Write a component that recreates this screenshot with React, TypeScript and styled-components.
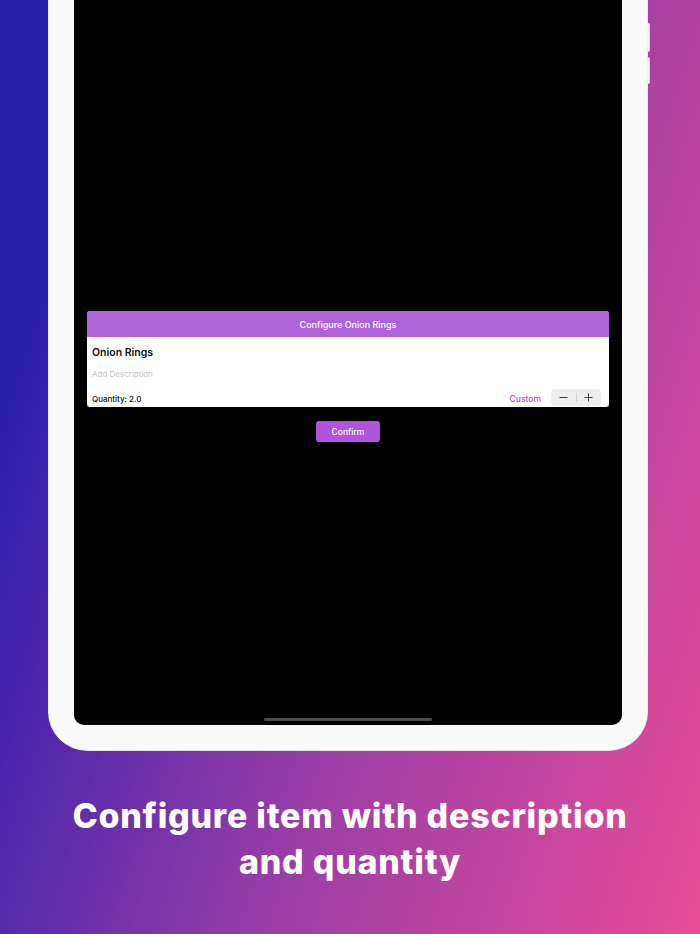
import React from "react";
import styled, { createGlobalStyle } from "styled-components";

const GlobalStyle = createGlobalStyle`
  html, body {
    margin: 0;
    padding: 0;
  }
  body {
    font-family: Inter, "Liberation Sans", sans-serif;
  }
`;

const Page = styled.div`
  width: 700px;
  height: 934px;
  overflow: hidden;
  display: flex;
  flex-direction: column;
  background: linear-gradient(108deg, #2c1ead 14%, #9b3ea6 57%, #e84c98 100%);
`;

const DeviceFrame = styled.div`
  position: relative;
  box-sizing: border-box;
  margin-left: 49px;
  width: 598px;
  height: 750px;
  padding: 0 25px 25px;
  display: flex;
  background: #fafafa;
  border-radius: 0 0 38px 38px;
  box-shadow: 0 1px 0 #e2e2e2, 1px 0 0 #ececec, -1px 0 0 #ececec;
`;

const SideButton = styled.div<{ $top: number; $height: number }>`
  position: absolute;
  right: -3px;
  top: ${(p) => p.$top}px;
  width: 3px;
  height: ${(p) => p.$height}px;
  background: #f4f4f4;
  border: 1px solid #dcdcdc;
  border-left: none;
  border-radius: 0 2px 2px 0;
  box-sizing: border-box;
`;

const Screen = styled.div`
  flex: 1;
  display: flex;
  flex-direction: column;
  align-items: center;
  background: #000;
  border-radius: 0 0 10px 10px;
  padding-top: 311px;
`;

const Dialog = styled.div`
  align-self: stretch;
  margin: 0 13px;
  background: #fff;
  border-radius: 3px;
  overflow: hidden;
`;

const DialogHeader = styled.div`
  height: 26px;
  display: flex;
  align-items: center;
  justify-content: center;
  background: #ae62d9;
  color: #fff;
  font-size: 9px;
  font-weight: 500;
`;

const DialogBody = styled.div`
  display: flex;
  flex-direction: column;
  padding: 8px 8px 0 5px;
  height: 70px;
  box-sizing: border-box;
`;

const ItemName = styled.div`
  font-size: 10.5px;
  font-weight: 600;
  color: #111;
  line-height: 15px;
`;

const Placeholder = styled.div`
  margin-top: 8px;
  font-size: 8px;
  color: #c4c4c4;
  line-height: 12px;
`;

const QuantityRow = styled.div`
  margin-top: auto;
  height: 17px;
  display: flex;
  align-items: center;
  margin-bottom: 1px;
`;

const QuantityLabel = styled.span`
  font-size: 8px;
  font-weight: 500;
  color: #111;
  margin-top: 2px;
`;

const CustomLink = styled.span`
  margin-left: auto;
  margin-right: 10px;
  margin-top: 2px;
  font-size: 8.5px;
  font-weight: 500;
  color: #b24fdf;
`;

const Stepper = styled.div`
  width: 50px;
  height: 17px;
  display: flex;
  align-items: center;
  background: #eeeeee;
  border-radius: 4px;
`;

const StepButton = styled.div`
  flex: 1;
  display: flex;
  align-items: center;
  justify-content: center;
`;

const StepDivider = styled.div`
  width: 1px;
  height: 9px;
  background: #d2d2d2;
`;

const ConfirmButton = styled.div`
  margin-top: 14px;
  width: 64px;
  height: 21px;
  display: flex;
  align-items: center;
  justify-content: center;
  background: #b053dd;
  border-radius: 3px;
  color: #fff;
  font-size: 8.5px;
  font-weight: 500;
`;

const HomeIndicator = styled.div`
  margin-top: auto;
  margin-bottom: 4px;
  width: 168px;
  height: 3px;
  border-radius: 2px;
  background: #4b4b4b;
`;

const Caption = styled.h1`
  margin: 43px 0 0;
  text-align: center;
  color: #fff;
  font-family: Inter, "Open Sans", sans-serif;
  font-weight: 800;
  font-size: 34px;
  line-height: 46px;
  letter-spacing: 0.75px;
`;

const Minus = () => (
  <svg width="9" height="9" viewBox="0 0 10 10">
    <path d="M1 5h8" stroke="#222" strokeWidth="1" strokeLinecap="round" />
  </svg>
);

const Plus = () => (
  <svg width="9" height="9" viewBox="0 0 10 10">
    <path d="M1 5h8M5 1v8" stroke="#222" strokeWidth="1" strokeLinecap="round" />
  </svg>
);

const App = () => {
  return (
    <Page>
      <GlobalStyle />
      <DeviceFrame>
        <SideButton $top={23} $height={29} />
        <SideButton $top={57} $height={27} />
        <Screen>
          <Dialog>
            <DialogHeader>Configure Onion Rings</DialogHeader>
            <DialogBody>
              <ItemName>Onion Rings</ItemName>
              <Placeholder>Add Description</Placeholder>
              <QuantityRow>
                <QuantityLabel>Quantity: 2.0</QuantityLabel>
                <CustomLink>Custom</CustomLink>
                <Stepper>
                  <StepButton>
                    <Minus />
                  </StepButton>
                  <StepDivider />
                  <StepButton>
                    <Plus />
                  </StepButton>
                </Stepper>
              </QuantityRow>
            </DialogBody>
          </Dialog>
          <ConfirmButton>Confirm</ConfirmButton>
          <HomeIndicator />
        </Screen>
      </DeviceFrame>
      <Caption>
        Configure item with description
        <br />
        and quantity
      </Caption>
    </Page>
  );
};

export default App;
